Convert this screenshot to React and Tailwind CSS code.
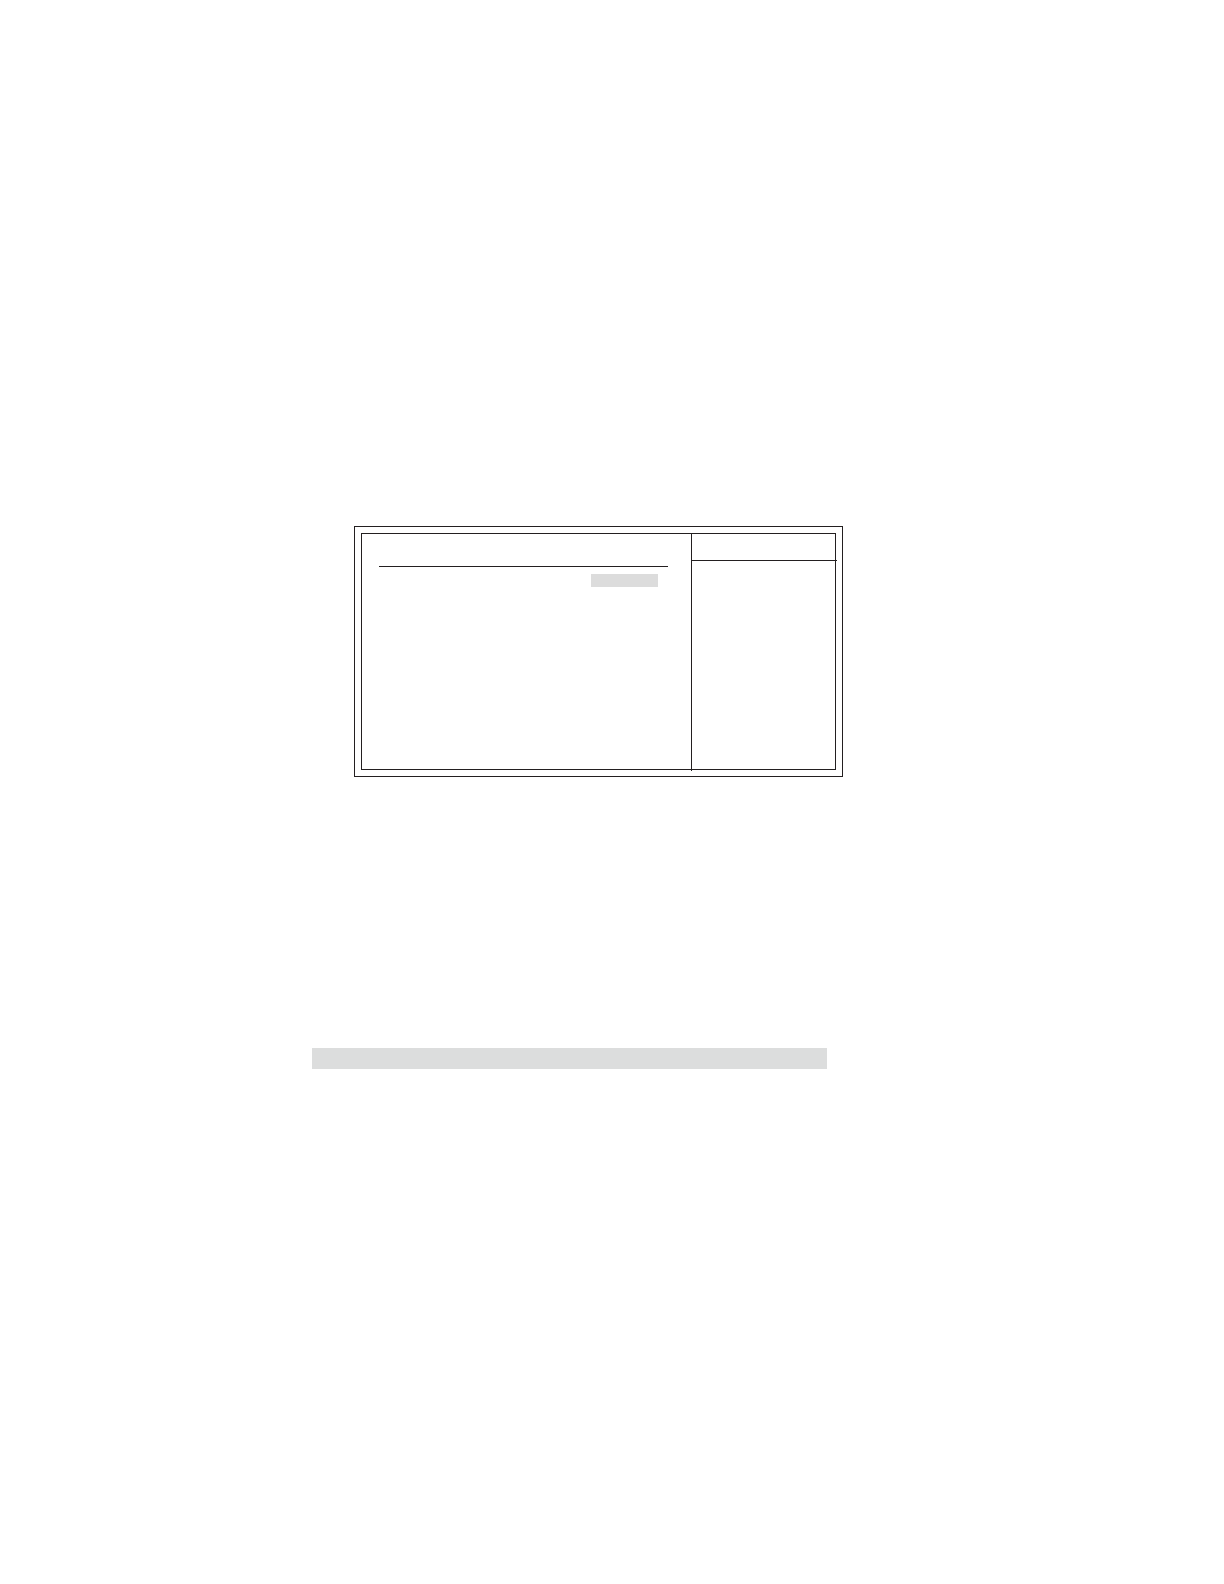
export default function App() {
  return (
    <main className="min-h-screen bg-white pt-[526px] pr-4 pl-[312px] pb-16">
      <section className="ml-[42px] max-w-[489px] border border-[#231f20] p-1.5">
        <div className="flex min-h-[237px] border border-[#231f20]">
          <div className="flex-1 pt-8 pr-[23px] pl-[17px]">
            <div className="flex justify-end border-t border-[#231f20] pt-[7px] pr-2.5">
              <div className="h-[13px] w-[67px] bg-[#dcdcdc]" />
            </div>
          </div>
          <aside className="-mb-0.5 w-36 border-l border-[#231f20]">
            <div className="-mr-0.5 h-[27px] border-b border-[#231f20]" />
          </aside>
        </div>
      </section>
      <div className="mt-[271px] h-[21px] max-w-[515px] bg-[#dcdddd]" />
    </main>
  );
}
